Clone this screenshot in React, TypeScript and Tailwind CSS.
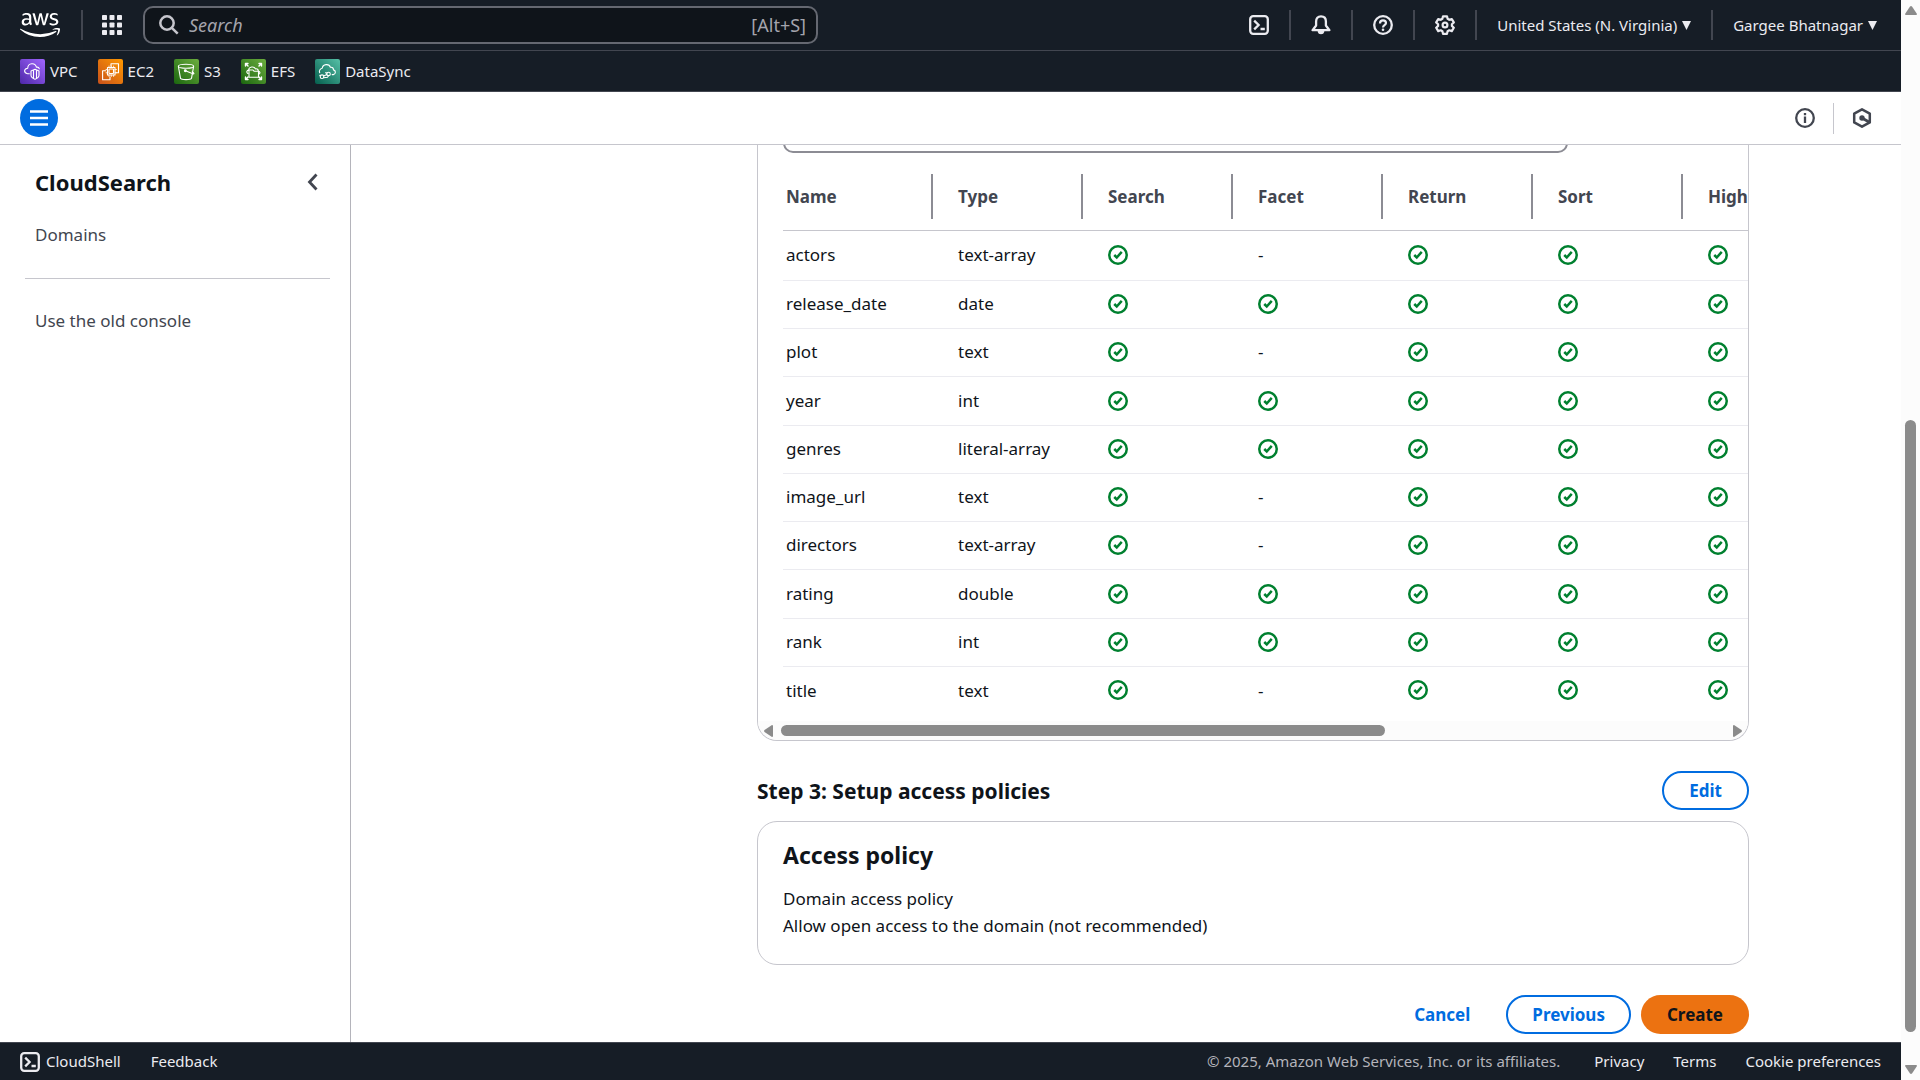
import React from "react";
import { FaAws } from "react-icons/fa";

function Check() {
  return (
    <svg viewBox="0 0 16 16" className="block size-5" fill="none" stroke="#00802f" strokeWidth="2" role="img" aria-label="Yes">
      <circle cx="8" cy="8" r="7" />
      <path d="m5 8 2 2 4-4.5" />
    </svg>
  );
}

function ShellIcon() {
  return (
    <svg viewBox="0 0 20 20" className="block size-5" fill="none" stroke="currentColor" strokeWidth="2.3" aria-hidden="true">
      <rect x="1.2" y="1.2" width="17.6" height="17.6" rx="3" />
      <path d="m5.2 5.6 4.4 4.4-4.4 4.4M11.5 14h4.3" />
    </svg>
  );
}

function BellIcon() {
  return (
    <svg viewBox="0 0 20 20" className="block size-5" fill="none" stroke="currentColor" strokeWidth="2.3" strokeLinejoin="round" aria-hidden="true">
      <path d="M10 1.3c-3.2 0-4.9 2.3-4.9 5.2v4L1.6 15.2h16.8l-3.5-4.7v-4c0-2.9-1.7-5.2-4.9-5.2z" />
      <path d="M7.2 16.5a2.9 2.9 0 0 0 5.6 0z" fill="currentColor" strokeWidth="1.2" />
    </svg>
  );
}

function HelpIcon() {
  return (
    <svg viewBox="0 0 20 20" className="block size-5" fill="none" stroke="currentColor" strokeWidth="2.3" aria-hidden="true">
      <circle cx="10" cy="10" r="8.8" />
      <path d="M7 8.4c0-1.9 1.3-3 3-3s3 1.1 3 2.7c0 2.1-3 2.2-3 4.4" strokeWidth="2.2" />
      <circle cx="10" cy="14.7" r="1.3" fill="currentColor" stroke="none" />
    </svg>
  );
}

function GearIcon() {
  return (
    <svg viewBox="0 0 20 20" className="block size-5" fill="none" stroke="currentColor" strokeWidth="2.2" strokeLinejoin="round" aria-hidden="true">
      <path d="M8 1.3h4l.6 2.5 1.7 1 2.5-.8 2 3.4-1.9 1.8v1.7l1.9 1.8-2 3.4-2.5-.8-1.7 1-.6 2.5H8l-.6-2.5-1.7-1-2.5.8-2-3.4 1.9-1.8V9.200L1.2 7.4l2-3.4 2.5.8 1.7-1z" />
      <circle cx="10" cy="10" r="2.4" />
    </svg>
  );
}

function Caret() {
  return (
    <svg viewBox="0 0 9 9" className="block size-[9px]" fill="currentColor" aria-hidden="true">
      <path d="M0 0h9L4.5 9z" />
    </svg>
  );
}

function Tile({ id, from, to, children }: { id: string; from: string; to: string; children: React.ReactNode }) {
  return (
    <svg viewBox="0 0 25 25" className="block size-[25px]" fill="none" stroke="#fff" strokeWidth="1.1" strokeLinejoin="round" strokeLinecap="round" aria-hidden="true">
      <defs>
        <linearGradient id={id} x1="0" y1="1" x2="1" y2="0">
          <stop offset="0" stopColor={from} />
          <stop offset="1" stopColor={to} />
        </linearGradient>
      </defs>
      <rect width="25" height="25" rx="2" fill={`url(#${id})`} stroke="none" />
      {children}
    </svg>
  );
}

const services = [
  {
    name: "VPC",
    icon: (
      <Tile id="vpc" from="#4d27a8" to="#a166ff">
        <path d="M9.3 14.7H7.6c-4.2-.6-3.8-5.2.1-5.5.3-5.6 7.6-5.9 8.7-1 1.5-.2 2.6.4 2.9 1.6" />
        <path d="M15 10.3l4 1.6v4.300c0 1.9-1.5 3-4 4-2.5-1-4-2.1-4-4v-4.300zM13.5 11v8.500M16.5 11v8.500" />
      </Tile>
    ),
  },
  {
    name: "EC2",
    icon: (
      <Tile id="ec2" from="#c8511b" to="#ff9900">
        <path d="M9.5 8.5h7.5V16H9.5zM13 4.8h7.5v9h-2.6M13 4.8v2.4M12 18v2.7H4.6v-8.9h3" />
        <rect x="11" y="10" width="4.5" height="4.5" rx=".5" />
        <path d="M11 7v1.500M13.300 7v1.500M15.600 7v1.500M11 16v1.500M13.300 16v1.500M15.600 16v1.500M8 10.500h1.500M8 13.800h1.500M17 10.500h1.500M17 13.800h1.500" strokeWidth=".8" />
      </Tile>
    ),
  },
  {
    name: "S3",
    icon: (
      <Tile id="s3" from="#1b660f" to="#6cae3e">
        <ellipse cx="12" cy="7.3" rx="7.6" ry="2" />
        <path d="M4.4 7.500l2.100 11.800c.8 1.700 10.200 1.700 11 0L19.600 7.500M11.500 11.800l7.300 3c1.800.5 1.200-1-.5-2.200" />
        <circle cx="11.3" cy="11.7" r=".9" fill="#fff" />
      </Tile>
    ),
  },
  {
    name: "EFS",
    icon: (
      <Tile id="efs" from="#1b660f" to="#6cae3e">
        <path d="M8 18.200h9.500v-6H13l-1-1.200H8zM6.800 14.500c-1.700-1-1-3.200.8-3.400.2-3.500 5.600-4.300 6.800-1.200 2-.5 2.800.8 2.900 2 1.900.6 2 2.200 1 3" />
        <path d="M4.500 7V4.500H7M4.800 4.800l2.200 2.200M18 4.500h2.500V7M20.200 4.800L18 7M4.500 18v2.500H7M4.800 20.200L7 18M18 20.500h2.500V18M20.200 20.200L18 18" strokeWidth="1.4" />
      </Tile>
    ),
  },
  {
    name: "DataSync",
    icon: (
      <Tile id="datasync" from="#055f4e" to="#56c0a7">
        <path d="M4.700 13.800c-.9-2.100.3-4.100 2.500-4.500.5-4.500 7-5 8.200-1 2-.4 3 .8 3.100 2.600 2.600.8 2.500 4-.2 4.700h-1.100" />
        <circle cx="7" cy="17.7" r="1.8" />
        <circle cx="13.5" cy="15" r="1.8" />
        <path d="M4.800 16.400l1 .3M8.700 17l3.200-1.400M9 18.700l3.500-.5 1-1.400M10.500 13.700l1.500.4" />
      </Tile>
    ),
  },
];

const columns = ["Name", "Type", "Search", "Facet", "Return", "Sort", "Highlight"];

const fields = [
  { name: "actors", type: "text-array", facet: false },
  { name: "release_date", type: "date", facet: true },
  { name: "plot", type: "text", facet: false },
  { name: "year", type: "int", facet: true },
  { name: "genres", type: "literal-array", facet: true },
  { name: "image_url", type: "text", facet: false },
  { name: "directors", type: "text-array", facet: false },
  { name: "rating", type: "double", facet: true },
  { name: "rank", type: "int", facet: true },
  { name: "title", type: "text", facet: false },
];

function Divider() {
  return <span className="mx-5 h-[30px] w-[2px] bg-[#424650]" />;
}

function TopBar() {
  return (
    <header className="shrink-0 bg-[#161d26] text-[15px] text-[#ebebf0]">
      <div className="flex h-[51px] items-center border-b border-[#424650] pr-6 pl-5">
        <a href="#" aria-label="AWS home" className="text-white">
          <FaAws className="block h-8 w-10" />
        </a>
        <span className="ml-[21px] h-[30px] w-[2px] bg-[#424650]" />
        <button aria-label="Services" className="ml-[19px]">
          <svg viewBox="0 0 20 20" className="block size-5" fill="currentColor" aria-hidden="true">
            {[0, 7.5, 15].map((y) =>
              [0, 7.5, 15].map((x) => <rect key={`${x}-${y}`} x={x} y={y} width="5" height="5" rx=".8" />)
            )}
          </svg>
        </button>
        <label className="ml-[21px] flex h-[38px] w-[675px] shrink items-center rounded-[10px] border-2 border-[#656871] bg-[#0f141a] px-[14px] text-[18px] text-[#a4a4ad]">
          <svg viewBox="0 0 20 20" className="block size-5 shrink-0 text-[#c6c6cd]" fill="none" stroke="currentColor" strokeWidth="2.5" aria-hidden="true">
            <circle cx="8" cy="8" r="6.7" />
            <path d="m12.8 12.8 5.9 5.9" />
          </svg>
          <input
            type="search"
            aria-label="Search"
            placeholder="Search"
            className="ml-[10px] min-w-0 flex-1 bg-transparent outline-none placeholder:text-[#a4a4ad] placeholder:italic"
          />
          <span className="-mr-1">[Alt+S]</span>
        </label>
        <div className="ml-auto flex shrink-0 items-center">
          <button aria-label="CloudShell"><ShellIcon /></button>
          <Divider />
          <button aria-label="Notifications"><BellIcon /></button>
          <Divider />
          <button aria-label="Help"><HelpIcon /></button>
          <Divider />
          <button aria-label="Settings"><GearIcon /></button>
          <Divider />
          <button className="flex items-center gap-[5px]">United States (N. Virginia)<Caret /></button>
          <Divider />
          <button className="flex items-center gap-[5px]">Gargee Bhatnagar<Caret /></button>
        </div>
      </div>
      <nav aria-label="Favorites" className="flex h-[41px] items-center gap-5 border-b border-[#424650] pl-5">
        {services.map((s) => (
          <a key={s.name} href="#" className="flex items-center gap-[5px]">
            {s.icon}
            <span>{s.name}</span>
          </a>
        ))}
      </nav>
    </header>
  );
}

function ToolBar() {
  return (
    <div className="flex h-[53px] shrink-0 items-center border-b border-[#c6c6cd] pr-[29px] pl-5 text-[#424650]">
      <button aria-label="Open navigation" className="flex size-[38px] items-center justify-center rounded-full bg-[#006ce0] text-white">
        <svg viewBox="0 0 18 16" className="block h-4 w-[18px]" fill="none" stroke="currentColor" strokeWidth="2.4" aria-hidden="true">
          <path d="M0 1.5h18M0 8h18M0 14.5h18" />
        </svg>
      </button>
      <button aria-label="Info" className="ml-auto">
        <svg viewBox="0 0 20 20" className="block size-5" fill="none" stroke="currentColor" strokeWidth="2.3" aria-hidden="true">
          <circle cx="10" cy="10" r="8.8" />
          <path d="M10 8.5V15M10 5v2.2" />
        </svg>
      </button>
      <span className="mx-[18px] h-[31px] w-px bg-[#c6c6cd]" />
      <button aria-label="Amazon Q">
        <svg viewBox="0 0 20 20" className="block size-5" fill="none" stroke="currentColor" strokeWidth="2.5" strokeLinejoin="round" aria-hidden="true">
          <path d="m10 1.3 7.8 4.3v8.8L10 18.7l-7.8-4.3V5.6z" />
          <path d="m10 10 7 4" strokeWidth="2.8" />
          <circle cx="10" cy="10" r="2.7" fill="currentColor" stroke="none" />
        </svg>
      </button>
    </div>
  );
}

function SideNav() {
  return (
    <aside className="w-[351px] shrink-0 border-r border-[#b4b4bb] pt-[19px] pr-5 pl-[25px] text-[#424650]">
      <div className="flex h-9 items-center justify-between pr-[10px] pl-[10px]">
        <h2 className="text-[22px] font-bold text-[#0f141a]">CloudSearch</h2>
        <button aria-label="Close navigation">
          <svg viewBox="0 0 16 20" className="block h-5 w-4" fill="none" stroke="currentColor" strokeWidth="2.8" aria-hidden="true">
            <path d="M12.5 2.5 5.5 10l7 7.5" />
          </svg>
        </button>
      </div>
      <a href="#" className="mt-[22px] block pl-[10px] text-[17px] leading-[26px]">Domains</a>
      <hr className="mt-[30px] border-[#c6c6cd]" />
      <a href="#" className="mt-[29px] block pl-[10px] text-[17px] leading-[26px]">Use the old console</a>
    </aside>
  );
}

function FieldTable() {
  return (
    <section className="overflow-hidden rounded-b-[20px] border border-t-0 border-[#c6c6cd]">
      <div className="flex h-2 items-end overflow-hidden pl-[25px]">
        <input aria-label="Find index fields" className="h-10 w-[785px] shrink-0 rounded-[10px] border-2 border-[#8c8c94]" />
      </div>
      <div className="overflow-hidden pt-[10px] pb-[7px] pl-[25px]">
        <table className="w-[1050px] table-fixed border-collapse text-left text-[17px] text-[#0f141a]">
          <thead>
            <tr className="h-[67px] border-b border-[#c6c6cd] text-[#424650]">
              {columns.map((c) => (
                <th key={c} scope="col" className="p-0 font-bold">
                  <div className={`flex h-[45px] items-center border-r-2 border-[#8c8c94] ${c === "Name" ? "pl-[3px]" : "pl-[25px]"}`}>{c}</div>
                </th>
              ))}
            </tr>
          </thead>
          <tbody>
            {fields.map((f) => (
              <tr key={f.name} className="h-12 border-b border-[#ebebf0] first:h-[50px] last:border-b-0 nth-[4n]:h-[49px]">
                <td className="p-0 pl-[3px]">{f.name}</td>
                <td className="p-0 pl-[25px]">{f.type}</td>
                <td className="p-0 pl-[25px]"><Check /></td>
                <td className="p-0 pl-[25px]">{f.facet ? <Check /> : "-"}</td>
                <td className="p-0 pl-[25px]"><Check /></td>
                <td className="p-0 pl-[25px]"><Check /></td>
                <td className="p-0 pl-[25px]"><Check /></td>
              </tr>
            ))}
          </tbody>
        </table>
      </div>
      <div className="flex h-[19px] items-center bg-[#fcfcfc] px-[6px] text-[#8b8b8b]" aria-hidden="true">
        <svg viewBox="0 0 9 12" className="block h-3 w-[9px]" fill="currentColor">
          <path d="M8 0q1 0 1 1v10q0 1-1 1L.5 7Q-.3 6 .5 5z" />
        </svg>
        <div className="mx-2 flex-1">
          <div className="h-[11px] w-[64%] rounded-full bg-[#8b8b8b]" />
        </div>
        <svg viewBox="0 0 9 12" className="block h-3 w-[9px]" fill="currentColor">
          <path d="M1 0Q0 0 0 1v10q0 1 1 1l7.5-5q.8-1 0-2z" />
        </svg>
      </div>
    </section>
  );
}

function Main() {
  return (
    <main className="min-w-0 flex-1 overflow-hidden">
      <div className="mx-auto flex w-full max-w-[1246px]">
        <div className="w-[254px] shrink-0" />
        <div className="min-w-0 flex-1">
          <FieldTable />
          <div className="mt-[30px] flex items-center justify-between">
            <h2 className="text-[21px] leading-7 font-bold text-[#0f141a]">Step 3: Setup access policies</h2>
            <button className="h-[39px] rounded-full border-2 border-[#006ce0] px-[25px] text-[17px] font-bold text-[#006ce0]">Edit</button>
          </div>
          <section className="mt-[11px] rounded-[20px] border border-[#c6c6cd] px-[25px] pt-[17px] pb-[25px] text-[17px] leading-[27px] text-[#0f141a]">
            <h3 className="mb-[14px] text-[23px] leading-8 font-bold">Access policy</h3>
            <p>Domain access policy</p>
            <p>Allow open access to the domain (not recommended)</p>
          </section>
          <div className="mt-[30px] flex justify-end gap-[10px] text-[17px] font-bold">
            <button className="h-[39px] px-[26px] text-[#006ce0]">Cancel</button>
            <button className="h-[39px] rounded-full border-2 border-[#006ce0] px-6 text-[#006ce0]">Previous</button>
            <button className="h-[39px] rounded-full bg-[#ec7211] px-[26px] text-[#0f141a]">Create</button>
          </div>
        </div>
      </div>
    </main>
  );
}

function Footer() {
  return (
    <footer className="flex h-[38px] shrink-0 items-center border-t border-[#424650] bg-[#161d26] px-5 text-[15px] text-[#ebebf0]">
      <button className="flex items-center gap-[6px]"><ShellIcon />CloudShell</button>
      <a href="#" className="ml-[30px]">Feedback</a>
      <span className="ml-auto text-[#b4b4bb]">© 2025, Amazon Web Services, Inc. or its affiliates.</span>
      <a href="#" className="ml-[34px]">Privacy</a>
      <a href="#" className="ml-[29px]">Terms</a>
      <a href="#" className="ml-[29px]">Cookie preferences</a>
    </footer>
  );
}

function PageScrollbar() {
  return (
    <div className="flex w-[19px] shrink-0 flex-col items-center bg-[#fcfcfc] py-[6px] text-[#8b8b8b]" aria-hidden="true">
      <svg viewBox="0 0 12 9" className="block h-[9px] w-3" fill="currentColor">
        <path d="M0 8q0 1 1 1h10q1 0 1-1L7 .5Q6-.3 5 .5z" />
      </svg>
      <div className="flex w-full flex-1 flex-col items-center pt-[405px] pb-[33px]">
        <div className="w-[11px] flex-1 rounded-full bg-[#8b8b8b]" />
      </div>
      <svg viewBox="0 0 12 9" className="block h-[9px] w-3" fill="currentColor">
        <path d="M0 1q0-1 1-1h10q1 0 1 1L7 8.5q-1 .8-2 0z" />
      </svg>
    </div>
  );
}

export default function App() {
  return (
    <div className="flex h-screen bg-white font-['Noto_Sans',sans-serif]">
      <div className="flex min-w-0 flex-1 flex-col">
        <TopBar />
        <ToolBar />
        <div className="flex min-h-0 flex-1">
          <SideNav />
          <Main />
        </div>
        <Footer />
      </div>
      <PageScrollbar />
    </div>
  );
}
